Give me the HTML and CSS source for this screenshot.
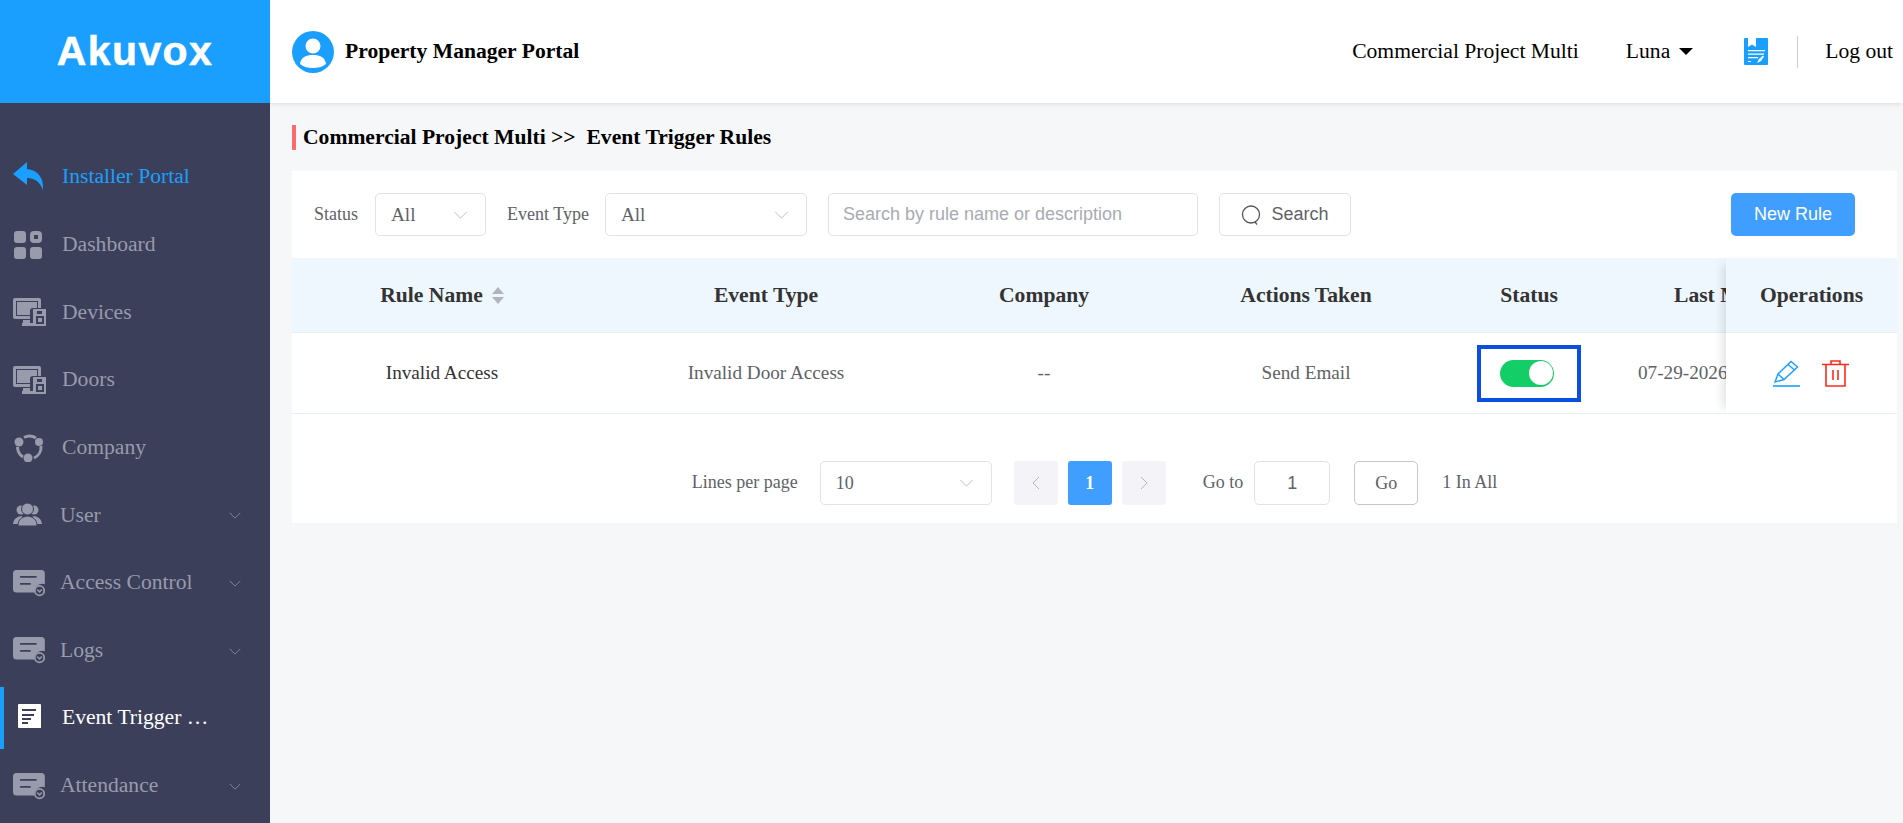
FILE: index.html
```html
<!DOCTYPE html>
<html lang="en">
<head>
    <meta charset="UTF-8">
    <meta name="viewport" content="width=device-width, initial-scale=1.0">
    <title>Event Trigger Rules</title>
    <link rel="stylesheet" href="styles.css">
</head>
<body>
    <svg class="icon-defs" aria-hidden="true">
        <symbol id="i-device" viewBox="0 0 33 28">
            <path fill-rule="evenodd" d="M2 0H26a2 2 0 0 1 2 2V10H25V3H3V18H17V21H2a2 2 0 0 1-2-2V2a2 2 0 0 1 2-2Z"/>
            <path d="M4 4H24V10H20a3 3 0 0 0-3 3V17H4Z"/>
            <path d="M10 22H17V25H21V28H9V25H10Z"/>
            <path fill-rule="evenodd" d="M20 11H33V28H20ZM24 13V16H29V13ZM23 18V26H31V18ZM25 20H29V24H25Z"/>
        </symbol>
        <symbol id="i-card" viewBox="0 0 28 22">
            <path d="M3 0H24a3 3 0 0 1 3 3V12a7 7 0 0 0-9 7H3a3 3 0 0 1-3-3V3a3 3 0 0 1 3-3Z"/>
            <path class="icon-cut" d="M6 5H20V6.500H6ZM6 11H15V12.500H6Z"/>
            <circle cx="22.500" cy="17.500" r="4" fill="none" stroke="currentColor" stroke-width="1.500"/>
            <path d="M20.500 16.500L22.500 18.500L24.500 16.500" fill="none" stroke="currentColor" stroke-width="1.300"/>
        </symbol>
        <symbol id="i-chevron" viewBox="0 0 16 9">
            <path d="M1 1L8 8L15 1" fill="none" stroke="currentColor" stroke-width="1"/>
        </symbol>
    </svg>

    <div class="layout">
        <aside class="sidebar">
            <div class="logo"><span class="logo-text">Akuvox</span></div>
            <nav class="menu">
                <a class="menu-item back">
                    <svg class="menu-icon" viewBox="0 0 33 28"><path fill="currentColor" d="M0 12L14 0V7C25 8 31 16 30 28C27 20 22 16 14 16V23Z"/></svg>
                    <span class="menu-label">Installer Portal</span>
                </a>
                <a class="menu-item">
                    <svg class="menu-icon" viewBox="0 0 33 28">
                        <rect x="1" width="12" height="12" rx="3" fill="currentColor"/>
                        <rect x="19" y="2" width="8" height="8" rx="2" fill="none" stroke="currentColor" stroke-width="4"/>
                        <rect x="1" y="16" width="12" height="12" rx="3" fill="currentColor"/>
                        <rect x="17" y="16" width="12" height="12" rx="3" fill="currentColor"/>
                    </svg>
                    <span class="menu-label">Dashboard</span>
                </a>
                <a class="menu-item">
                    <svg class="menu-icon"><use href="#i-device"/></svg>
                    <span class="menu-label">Devices</span>
                </a>
                <a class="menu-item">
                    <svg class="menu-icon"><use href="#i-device"/></svg>
                    <span class="menu-label">Doors</span>
                </a>
                <a class="menu-item">
                    <svg class="menu-icon" viewBox="0 0 33 28">
                        <g fill="none" stroke="currentColor" stroke-width="3">
                            <path d="M11 3.500A12 12 0 0 1 23 4"/>
                            <path d="M28 12A12 12 0 0 1 21 24"/>
                            <path d="M10 23A12 12 0 0 1 4.500 13"/>
                        </g>
                        <circle cx="6" cy="8" r="4.500" fill="currentColor"/>
                        <circle cx="26" cy="8" r="4" fill="currentColor"/>
                        <circle cx="15" cy="24" r="4.500" fill="currentColor"/>
                    </svg>
                    <span class="menu-label">Company</span>
                </a>
                <a class="menu-item sub">
                    <svg class="menu-icon" viewBox="0 0 33 28" fill="currentColor">
                        <circle cx="8" cy="9" r="4.500"/>
                        <circle cx="21" cy="9" r="4.500"/>
                        <path d="M0 23C1 17 4 16 8 15C11 16 13 18 13 23Z"/>
                        <path d="M16 23C16 18 18 16 21 15C25 16 28 17 29 23Z"/>
                        <circle cx="14.500" cy="8" r="6" stroke="#3c3f5a"/>
                        <path d="M5 25C5 18 9 16 14.500 15C20 16 24 18 24 25Z" stroke="#3c3f5a"/>
                    </svg>
                    <span class="menu-label">User</span>
                    <svg class="menu-arrow"><use href="#i-chevron"/></svg>
                </a>
                <a class="menu-item sub">
                    <svg class="menu-icon"><use href="#i-card"/></svg>
                    <span class="menu-label">Access Control</span>
                    <svg class="menu-arrow"><use href="#i-chevron"/></svg>
                </a>
                <a class="menu-item sub">
                    <svg class="menu-icon"><use href="#i-card"/></svg>
                    <span class="menu-label">Logs</span>
                    <svg class="menu-arrow"><use href="#i-chevron"/></svg>
                </a>
                <a class="menu-item active">
                    <svg class="menu-icon" viewBox="0 0 33 28">
                        <path fill="#fff" d="M5 1a1 1 0 0 1 1-1H27a1 1 0 0 1 1 1V24L24 24V24H6a1 1 0 0 1-1-1Z"/>
                        <path fill="#3c3f5a" d="M9 5H23V7H9ZM9 10H21V12H9ZM9 14H18V16H9ZM9 18H15V20H9Z"/>
                    </svg>
                    <span class="menu-label">Event Trigger …</span>
                </a>
                <a class="menu-item sub">
                    <svg class="menu-icon"><use href="#i-card"/></svg>
                    <span class="menu-label">Attendance</span>
                    <svg class="menu-arrow"><use href="#i-chevron"/></svg>
                </a>
            </nav>
        </aside>

        <div class="main">
            <header class="topbar">
                <svg class="avatar" viewBox="0 0 42 42">
                    <circle cx="21" cy="21" r="21" fill="#1a9fff"/>
                    <circle cx="21" cy="15" r="7.500" fill="#fff"/>
                    <path fill="#fff" d="M8 33C9 26 14 24 21 24C28 24 33 26 34 33C30 36 26 37 21 37C16 37 12 36 8 33Z"/>
                </svg>
                <div class="portal-name">Property Manager Portal</div>
                <div class="topbar-right">
                    <span class="project-name">Commercial Project Multi</span>
                    <span class="user-name">Luna<i class="caret"></i></span>
                    <svg class="doc-icon" viewBox="0 0 24 27">
                        <path fill="#1a9fff" d="M1 0H23a1 1 0 0 1 1 1V26a1 1 0 0 1-1 1H1a1 1 0 0 1-1-1V1a1 1 0 0 1 1-1Z"/>
                        <path fill="#fff" d="M4 0H12V9L8 6.500L4 9ZM4 12H21V13.200H4ZM4 15.500H20V16.700H4ZM4 19H14V20.200H4ZM4 23H7V24H4ZM13 25L15 21L19 17.500L20 18.500L17 23Z"/>
                    </svg>
                    <span class="divider"></span>
                    <span class="logout">Log out</span>
                </div>
            </header>

            <div class="content">
                <h2 class="crumb">Commercial Project Multi &gt;&gt;&nbsp; Event Trigger Rules</h2>

                <section class="card">
                    <div class="filters">
                        <label class="filter-label">Status</label>
                        <div class="select select-status">
                            <span>All</span>
                            <svg class="select-arrow"><use href="#i-chevron"/></svg>
                        </div>
                        <label class="filter-label label-type">Event Type</label>
                        <div class="select select-type">
                            <span>All</span>
                            <svg class="select-arrow"><use href="#i-chevron"/></svg>
                        </div>
                        <input class="search-input" type="text" placeholder="Search by rule name or description">
                        <button class="btn-search">
                            <svg viewBox="0 0 20 20" class="search-icon">
                                <circle cx="10" cy="9.500" r="8.500" fill="none" stroke="currentColor" stroke-width="1.300"/>
                                <path d="M14 17L16 19.500" stroke="currentColor" stroke-width="1.300"/>
                            </svg>
                            Search
                        </button>
                        <button class="btn-new">New Rule</button>
                    </div>

                    <div class="table">
                        <div class="table-scroll">
                            <div class="tr thead">
                                <div class="td">Rule Name
                                    <span class="sort"><i class="sort-up"></i><i class="sort-down"></i></span>
                                </div>
                                <div class="td">Event Type</div>
                                <div class="td">Company</div>
                                <div class="td">Actions Taken</div>
                                <div class="td">Status</div>
                                <div class="td td-date head-date">Last Modified</div>
                            </div>
                            <div class="tr tbody">
                                <div class="td rule-name">Invalid Access</div>
                                <div class="td">Invalid Door Access</div>
                                <div class="td">--</div>
                                <div class="td">Send Email</div>
                                <div class="td">
                                    <div class="status-box"><div class="switch"><i class="switch-knob"></i></div></div>
                                </div>
                                <div class="td td-date">07-29-2026</div>
                            </div>
                        </div>
                        <div class="table-fixed">
                            <div class="fixed-head">Operations</div>
                            <div class="fixed-cell">
                                <svg class="op-icon" viewBox="0 0 27 27">
                                    <path fill="none" stroke="#1a9fff" stroke-width="1.400" d="M2 22L5 14L18 1.500L24.500 7L11 19.500ZM15 4.500L21.500 10M5 14L11 19.500"/>
                                    <path stroke="#1a9fff" stroke-width="1.600" d="M0 26H27"/>
                                </svg>
                                <svg class="op-icon" viewBox="0 0 27 27">
                                    <path fill="none" stroke="#ff2a1a" stroke-width="1.600" d="M0 4.500H27M9 4.500V1H18V4.500M4 4.500V26H23V4.500M11 10V20M16 10V20"/>
                                </svg>
                            </div>
                        </div>
                    </div>

                    <div class="pager">
                        <span class="pager-text">Lines per page</span>
                        <div class="select select-size">
                            <span>10</span>
                            <svg class="select-arrow"><use href="#i-chevron"/></svg>
                        </div>
                        <button class="page-btn">
                            <svg class="page-arrow" viewBox="0 0 8 14"><path d="M7 1L1 7L7 13" fill="none" stroke="currentColor"/></svg>
                        </button>
                        <button class="page-btn current">1</button>
                        <button class="page-btn">
                            <svg class="page-arrow" viewBox="0 0 8 14"><path d="M1 1L7 7L1 13" fill="none" stroke="currentColor"/></svg>
                        </button>
                        <span class="pager-text goto">Go to</span>
                        <div class="goto-input">1</div>
                        <button class="go-btn">Go</button>
                        <span class="pager-text">1 In All</span>
                    </div>
                </section>
            </div>
        </div>
    </div>
</body>
</html>
```

FILE: styles.css
```css
* {
    box-sizing: border-box;
}
body {
    margin: 0;
    height: 823px;
    overflow: hidden;
    font-family: "Liberation Serif", "Times New Roman", serif;
    background: #f6f7f9;
    color: #606266;
}
.icon-defs {
    display: none;
}
.layout {
    display: flex;
    height: 100%;
}

/* Sidebar */
.sidebar {
    width: 270px;
    flex-shrink: 0;
    background: #3c3f5a;
    position: relative;
    z-index: 2;
}
.logo {
    height: 103px;
    background: #1a9fff;
    display: flex;
    align-items: center;
    justify-content: center;
}
.logo-text {
    font-family: "Liberation Sans", Arial, sans-serif;
    font-weight: bold;
    font-size: 41px;
    letter-spacing: 1.4px;
    color: #fff;
    -webkit-text-stroke: 0.5px #fff;
}
.menu {
    padding-top: 38px;
}
.menu-item {
    display: flex;
    align-items: center;
    height: 67.6px;
    padding-left: 13px;
    font-size: 21.6px;
    color: #979bab;
    position: relative;
}
.menu-item.back {
    height: 70px;
    color: #1a9fff;
}
.menu-item.active {
    color: #fff;
}
.menu-item.active::before {
    content: "";
    position: absolute;
    left: 0;
    top: 3px;
    bottom: 3px;
    width: 4px;
    background: #1a9fff;
}
.menu-icon {
    width: 33px;
    height: 28px;
    flex-shrink: 0;
    fill: currentColor;
    margin-right: 16px;
    color: #979bab;
}
.menu-item.back .menu-icon {
    color: #1a9fff;
}
.menu-item.sub .menu-icon {
    margin-right: 14px;
}
.icon-cut {
    fill: #3c3f5a;
}
.menu-arrow {
    width: 12px;
    height: 7px;
    position: absolute;
    right: 29px;
    top: 31px;
    color: #979bab;
}

/* Top bar */
.main {
    flex: 1;
    min-width: 0;
    display: flex;
    flex-direction: column;
}
.topbar {
    height: 103px;
    flex-shrink: 0;
    background: #fff;
    box-shadow: 0 1px 5px rgba(0, 0, 0, 0.1);
    display: flex;
    align-items: center;
    padding-left: 22px;
    color: #000;
    position: relative;
}
.avatar {
    width: 42px;
    height: 42px;
    margin-right: 11px;
}
.portal-name {
    font-size: 21.6px;
    font-weight: bold;
}
.topbar-right {
    margin-left: auto;
    display: flex;
    align-items: center;
    font-size: 21.6px;
    padding-right: 10px;
}
.user-name {
    margin-left: 47px;
    display: flex;
    align-items: center;
}
.caret {
    margin-left: 9px;
    border-left: 7px solid transparent;
    border-right: 7px solid transparent;
    border-top: 7px solid #000;
}
.doc-icon {
    width: 24px;
    height: 27px;
    margin-left: 51px;
}
.divider {
    width: 1px;
    height: 32px;
    background: #d6cccc;
    margin: 0 27px 0 29px;
}

/* Content */
.content {
    flex: 1;
    padding: 22px 6px 0 22px;
}
.crumb {
    margin: 0 0 21px;
    height: 25px;
    line-height: 25px;
    border-left: 4px solid #ff6b6b;
    padding-left: 7px;
    font-size: 21.6px;
    font-weight: bold;
    color: #000;
}
.card {
    background: #fff;
}
.filters {
    height: 87px;
    display: flex;
    align-items: center;
    padding: 0 42px 0 22px;
    font-size: 18px;
}
.filter-label {
    margin-right: 17px;
}
.label-type {
    margin-left: 21px;
    margin-right: 16px;
}
.select {
    height: 43px;
    border: 1.5px solid #e1e2ea;
    border-radius: 5px;
    display: flex;
    align-items: center;
    justify-content: space-between;
    padding: 0 17px 0 15px;
    font-size: 19.2px;
    color: #606266;
}
.select-status {
    width: 111px;
}
.select-type {
    width: 202px;
}
.select-size {
    width: 172px;
    height: 44px;
    margin: 0 22px;
    font-size: 18px;
}
.select-arrow {
    width: 15px;
    height: 8px;
    color: #b4b7c0;
}
.search-input {
    width: 370px;
    height: 43px;
    margin-left: 21px;
    border: 1.5px solid #e1e2ea;
    border-radius: 5px;
    padding: 0 14px;
    font-family: "Liberation Sans", Arial, sans-serif;
    font-size: 18px;
    outline: none;
}
.search-input::placeholder {
    color: #a8abb2;
}
.btn-search {
    width: 132px;
    height: 43px;
    margin-left: 21px;
    background: #fff;
    border: 1.5px solid #e1e2ea;
    border-radius: 5px;
    font-family: "Liberation Sans", Arial, sans-serif;
    font-size: 18px;
    color: #606266;
    display: flex;
    align-items: center;
    justify-content: center;
    gap: 10px;
    padding: 0;
}
.search-icon {
    width: 20px;
    height: 20px;
    color: #555;
}
.btn-new {
    margin-left: auto;
    width: 124px;
    height: 43px;
    background: #409eff;
    border: none;
    border-radius: 5px;
    color: #fff;
    font-family: "Liberation Sans", Arial, sans-serif;
    font-size: 18px;
    padding: 0;
}

/* Table */
.table {
    display: flex;
}
.table-scroll {
    flex: 1;
    min-width: 0;
    overflow: hidden;
}
.tr {
    display: grid;
    grid-template-columns: 300px 348px 208px 316px 130px 260px;
    width: 1562px;
    align-items: center;
}
.thead {
    height: 75px;
    background: #eff7fe;
    border-bottom: 1px solid #e8eef5;
    font-size: 21.6px;
    font-weight: bold;
    color: #333;
}
.tbody {
    height: 81px;
    border-bottom: 1px solid #e8eef5;
    font-size: 19.2px;
    color: #606266;
}
.td {
    display: flex;
    align-items: center;
    justify-content: center;
    white-space: nowrap;
}
.td-date {
    justify-content: flex-start;
    padding-left: 44px;
}
.head-date {
    padding-left: 80px;
}
.rule-name {
    color: #333;
}
.sort {
    display: inline-flex;
    flex-direction: column;
    gap: 3px;
    margin-left: 9px;
}
.sort-up {
    border-left: 6px solid transparent;
    border-right: 6px solid transparent;
    border-bottom: 7px solid #b2b4c0;
}
.sort-down {
    border-left: 6px solid transparent;
    border-right: 6px solid transparent;
    border-top: 7px solid #b2b4c0;
}
.status-box {
    width: 104px;
    height: 57px;
    border: 4px solid #0a4fe0;
    display: flex;
    align-items: center;
    justify-content: center;
    padding-right: 4px;
}
.switch {
    width: 54px;
    height: 27px;
    border-radius: 14px;
    background: #13ce66;
    display: flex;
    align-items: center;
    justify-content: flex-end;
    padding-right: 1.500px;
}
.switch-knob {
    width: 24px;
    height: 24px;
    border-radius: 50%;
    background: #fff;
}
.table-fixed {
    width: 171px;
    flex-shrink: 0;
    background: #fff;
    box-shadow: -8px 0 10px -6px rgba(0, 0, 0, 0.14);
    position: relative;
}
.fixed-head {
    height: 75px;
    background: #eff7fe;
    border-bottom: 1px solid #e8eef5;
    display: flex;
    align-items: center;
    justify-content: center;
    font-size: 21.6px;
    font-weight: bold;
    color: #333;
}
.fixed-cell {
    height: 81px;
    border-bottom: 1px solid #e8eef5;
    display: flex;
    align-items: center;
    justify-content: center;
    gap: 22px;
    padding-right: 1px;
}
.op-icon {
    width: 27px;
    height: 27px;
}

/* Pagination */
.pager {
    height: 109px;
    display: flex;
    justify-content: center;
    align-items: flex-start;
    padding-top: 47px;
}
.pager-text {
    height: 44px;
    line-height: 42px;
    font-size: 18px;
    color: #606266;
}
.pager-text.goto {
    margin: 0 11px 0 27px;
}
.page-btn {
    width: 44px;
    height: 44px;
    margin-right: 10px;
    background: #f4f4f8;
    border: none;
    border-radius: 3px;
    color: #b4b7c0;
    padding: 0;
    display: flex;
    align-items: center;
    justify-content: center;
}
.page-btn:last-of-type {
    margin-right: 0;
}
.page-btn.current {
    background: #409eff;
    color: #fff;
    font-family: "Liberation Serif", serif;
    font-weight: bold;
    font-size: 18px;
}
.page-arrow {
    width: 8px;
    height: 14px;
}
.goto-input {
    width: 76px;
    height: 44px;
    border: 1.5px solid #e1e2ea;
    border-radius: 5px;
    display: flex;
    align-items: center;
    justify-content: center;
    font-family: "Liberation Sans", Arial, sans-serif;
    font-size: 18px;
    color: #606266;
}
.go-btn {
    width: 64px;
    height: 44px;
    margin: 0 24px;
    background: #fff;
    border: 1.5px solid #c4c6cf;
    border-radius: 5px;
    font-family: "Liberation Serif", serif;
    font-size: 18px;
    color: #606266;
    padding: 0;
}
```
